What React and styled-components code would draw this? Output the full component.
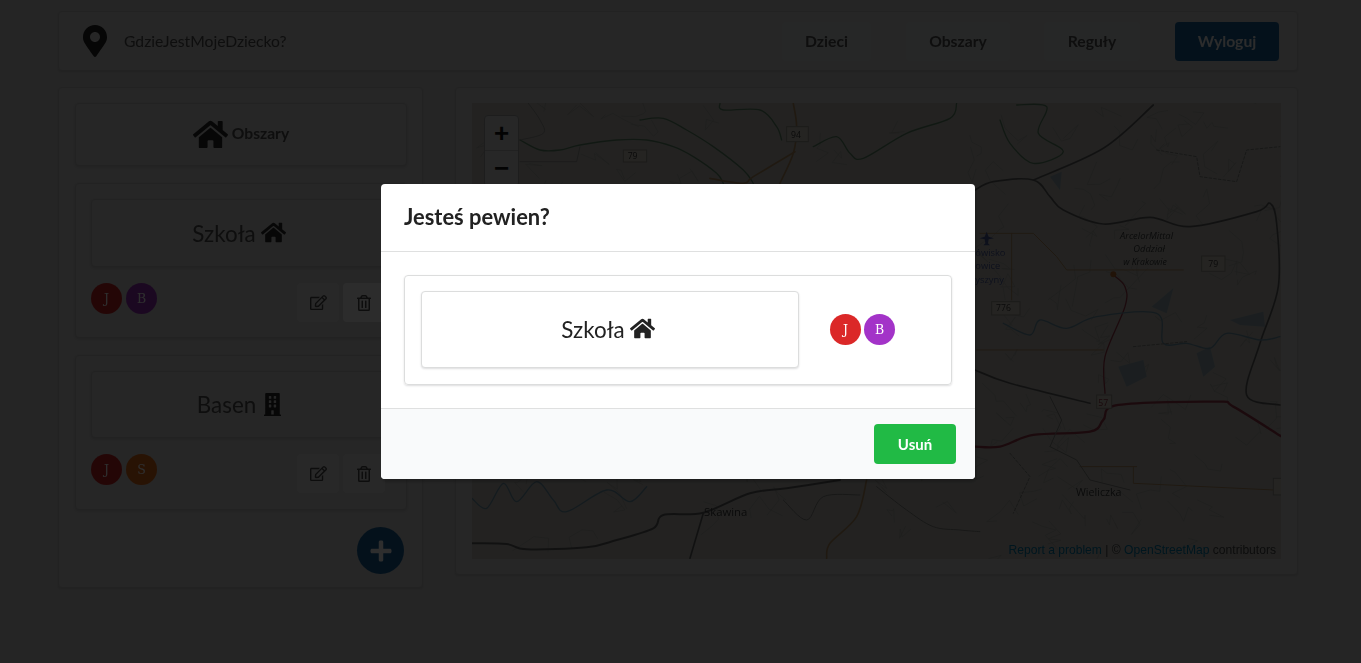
import React from 'react';
import styled, { createGlobalStyle } from 'styled-components';
import { FaHome, FaMapMarkerAlt, FaRegEdit, FaRegTrashAlt, FaBuilding, FaPlus } from 'react-icons/fa';

const Global = createGlobalStyle`
  html, body { margin: 0; padding: 0; height: 100%; background: #cccccc; overflow: hidden; }
  * { box-sizing: border-box; }
  body { font-family: Lato, "Open Sans", sans-serif; font-size: 14px; color: #505050; }
`;

const Page = styled.div`
  width: 1361px;
  height: 663px;
  padding: 11px 63px 0 58px;
  filter: blur(0.5px);
`;

const Segment = styled.div`
  background: #cfcfcf;
  border: 1px solid #bcbcbc;
  border-radius: 4px;
  box-shadow: 0 1px 2px rgba(34, 36, 38, 0.12);
`;

const NavBar = styled(Segment)`
  height: 60px;
  display: flex;
  align-items: center;
  padding: 0 18px 0 23px;
  margin-bottom: 16px;
`;

const Brand = styled.div`
  display: flex;
  align-items: center;
  flex: 1;
  font-size: 15.7px;
  svg { font-size: 32px; color: #222; margin-right: 16px; width: 26px; }
`;

const NavButton = styled.div`
  height: 39px;
  width: ${p => p.$w}px;
  margin-left: ${p => p.$ml}px;
  display: flex;
  align-items: center;
  justify-content: center;
  border-radius: 4px;
  font-weight: 700;
  font-size: 15.7px;
  background: ${p => (p.$primary ? '#176098' : '#d2d8d8')};
  color: ${p => (p.$primary ? '#f0f0f0' : '#505050')};
`;

const Columns = styled.div`
  display: grid;
  grid-template-columns: 365px 843px;
  gap: 32px;
  align-items: start;
`;

const SidePanel = styled(Segment)`
  height: 501px;
  padding: 15px 15px 0 16px;
`;

const PanelTitle = styled(Segment)`
  height: 63px;
  margin-bottom: 17px;
  display: flex;
  align-items: center;
  justify-content: center;
  gap: 4px;
  font-weight: 700;
  font-size: 15.6px;
  svg { font-size: 35px; color: #2a2a2a; }
  span { margin-bottom: 4px; }
`;

const AreaCard = styled(Segment)`
  height: 155px;
  margin-bottom: 17px;
  padding: 15px;
`;

const AreaName = styled(Segment)`
  height: ${p => p.$h || 68}px;
  display: flex;
  align-items: center;
  justify-content: center;
  gap: 5px;
  font-size: 22.4px;
  svg { font-size: 25px; color: #2a2a2a; margin: 0 4px 2px 0; }
`;

const BuildingIcon = styled(FaBuilding)`
  && { width: 17px; height: 23px; margin: 0 4px 0 3px; }
`;

const AreaFooter = styled.div`
  display: flex;
  justify-content: space-between;
  padding: 16px 6px 0 0;
`;

const Avatars = styled.div`
  display: flex;
  gap: ${p => p.$gap}px;
`;

const Avatar = styled.div`
  width: 31px;
  height: 31px;
  border-radius: 50%;
  background: ${p => p.$bg};
  color: #fff;
  font-family: "DejaVu Serif", serif;
  font-size: 12.5px;
  display: flex;
  align-items: center;
  justify-content: center;
`;

const Actions = styled.div`
  display: flex;
  gap: 4px;
`;

const ActionButton = styled.div`
  width: 42px;
  height: 39px;
  border-radius: 4px;
  background: ${p => (p.$hover ? '#f4f4f4' : '#dedede')};
  color: #4c4c4c;
  font-size: ${p => p.$size}px;
  display: flex;
  align-items: center;
  justify-content: center;
`;

const Fab = styled.div`
  width: 47px;
  height: 47px;
  margin: 16px 3px 0 auto;
  border-radius: 50%;
  background: #176098;
  color: #fff;
  font-size: 24px;
  display: flex;
  align-items: center;
  justify-content: center;
`;

const MapPanel = styled(Segment)`
  height: 488px;
  padding: 15px 16px;
`;

const MapFrame = styled.div`
  position: relative;
  height: 456px;
  background: #bfbeb9;
  overflow: hidden;
`;

const MapSvg = styled.svg`
  display: block;
  width: 809px;
  height: 456px;
  text { font-family: "Open Sans", sans-serif; }
  path { stroke-linejoin: round; stroke-linecap: round; }
`;

const ZoomControl = styled.div`
  position: absolute;
  top: 12px;
  left: 12px;
  width: 35px;
  border: 1px solid #a0a0a0;
  border-radius: 4px;
  background: #d8d8d8;
`;

const ZoomKey = styled.div`
  height: 35px;
  display: flex;
  align-items: center;
  justify-content: center;
  font-family: "Liberation Sans", sans-serif;
  font-size: 26px;
  font-weight: 700;
  color: #111;
  border-bottom: 1px solid #b4b4b4;
`;

const Attribution = styled.div`
  position: absolute;
  right: 5px;
  bottom: 2px;
  font-family: "Liberation Sans", sans-serif;
  font-size: 12.1px;
  color: #444;
  span { color: #0078a8; }
`;

const Backdrop = styled.div`
  position: fixed;
  inset: 0;
  background: rgba(0, 0, 0, 0.82);
  display: flex;
  align-items: center;
  justify-content: center;
  padding-right: 5px;
`;

const Modal = styled.div`
  width: 594px;
  height: 295px;
  background: #fff;
  border-radius: 4px;
  overflow: hidden;
  display: flex;
  flex-direction: column;
  color: #222;
  box-shadow: 1px 3px 3px rgba(0, 0, 0, 0.2);
`;

const ModalHeader = styled.div`
  height: 68px;
  padding: 0 23px 2px;
  display: flex;
  align-items: center;
  border-bottom: 1px solid #dfe0e0;
  font-size: 21.9px;
  font-weight: 700;
`;

const ModalContent = styled.div`
  flex: 1;
  padding: 23px;
`;

const ModalCard = styled.div`
  height: 110px;
  padding: 15px 16px 17px;
  display: flex;
  align-items: center;
  border: 1px solid #dcdddd;
  border-radius: 4px;
  box-shadow: 0 1px 2px rgba(34, 36, 38, 0.15);
`;

const ModalName = styled(AreaName)`
  width: 378px;
  height: 77px;
  background: #fff;
  border-color: #dcdddd;
  box-shadow: 0 1px 2px rgba(34, 36, 38, 0.15);
  margin-right: 31px;
  svg { color: #222; }
`;

const ModalFooter = styled.div`
  height: 71px;
  padding: 0 19px;
  display: flex;
  align-items: center;
  justify-content: flex-end;
  background: #f9fafb;
  border-top: 1px solid #dfe0e0;
`;

const DeleteButton = styled.div`
  width: 82px;
  height: 40px;
  border-radius: 4px;
  background: #21ba45;
  color: #fff;
  font-weight: 700;
  font-size: 15px;
  display: flex;
  align-items: center;
  justify-content: center;
`;

// catmull-rom through "x,y x,y" points, roads on the map are not straight
function curve(str) {
  const p = str.trim().split(/\s+/).map(s => s.split(',').map(Number));
  let d = `M${p[0][0]},${p[0][1]}`;
  for (let i = 0; i < p.length - 1; i++) {
    const a = p[i - 1] || p[i];
    const b = p[i];
    const c = p[i + 1];
    const e = p[i + 2] || c;
    d += ` C${b[0] + (c[0] - a[0]) / 6},${b[1] + (c[1] - a[1]) / 6} ${c[0] - (e[0] - b[0]) / 6},${c[1] - (e[1] - b[1]) / 6} ${c[0]},${c[1]}`;
  }
  return d;
}

// faint small roads all over the map, fixed seed so it never changes
function smallRoads() {
  let seed = 7;
  const rnd = n => {
    seed = (seed * 16807) % 2147483647;
    return (seed % 1000) / 1000 * n;
  };
  const out = [];
  for (let i = 0; i < 220; i++) {
    let x = 472 + rnd(809);
    let y = 103 + rnd(456);
    let d = `M${x},${y}`;
    for (let k = 0; k < 4; k++) {
      x += rnd(30) - 15;
      y += rnd(30) - 15;
      d += ` L${x},${y}`;
    }
    out.push(d);
  }
  return out.join(' ');
}

const dark = { fill: 'none', stroke: '#626262' };
const minor = { fill: 'none', stroke: '#858480' };
const green = { fill: 'none', stroke: '#608868' };
const water = { fill: 'none', stroke: '#6f94a8' };
const orange = { fill: 'none', stroke: '#b08c60' };
const red = { fill: 'none', stroke: '#983848' };
const shield = { fill: '#ccc6ba', stroke: '#96938c', strokeWidth: 3 };
const label = { fill: '#3a3a3a' };
const pond = { fill: '#94a8b2' };

function MapDrawing() {
  return (
    <MapSvg viewBox="472 103 809 456">
      <path fill="none" stroke="#a8a69f" strokeWidth="0.7" d={smallRoads()} />
      {/* top strip, coordinates as read from the crop at 3x */}
      <g transform="translate(460 90) scale(0.3333)">
        <path {...green} strokeWidth="4" d={curve('180,150 240,180 300,180 360,165 470,150 560,150 640,170 700,200 770,250 790,280')} />
        <path {...minor} strokeWidth="2" d={curve('205,40 240,90 250,130 180,150')} />
        <path {...minor} strokeWidth="2" d="M180,215 H350 L360,170" />
        <path {...green} strokeWidth="4" d={curve('540,90 610,85 680,120 760,170 850,240 880,280')} />
        <path {...green} strokeWidth="4" d={curve('780,40 790,60 900,60 950,110 965,150')} />
        <path {...orange} strokeWidth="5" d={curve('1000,40 1010,110 1000,190 960,280')} />
        <path {...orange} strokeWidth="5" d={curve('1005,185 880,260 850,280 750,265')} />
        <path {...green} strokeWidth="4" d={curve('1060,170 1130,140 1170,190 1210,205 1340,130 1470,85 1490,40')} />
        <rect {...shield} x="980" y="110" width="65" height="45" />
        <rect {...shield} x="490" y="180" width="70" height="36" />
        <text {...label} x="993" y="144" fontSize="26">94</text>
        <text {...label} x="503" y="208" fontSize="26">79</text>
      </g>
      {/* bottom strip */}
      <g transform="translate(460 470) scale(0.3333)">
        <path {...dark} strokeWidth="6" d={curve('36,220 140,222 200,238 380,232 470,210 580,175 610,135 730,128 870,70 980,55 1140,30')} />
        <path {...water} strokeWidth="4" d={curve('36,85 80,115 130,40 170,95 230,35 280,90 320,125 440,60 510,95 560,50')} />
        <path {...dark} strokeWidth="5" d="M730,130 L690,265" />
        <path {...orange} strokeWidth="5" d={curve('1220,30 1190,140 1110,220 1100,265')} />
        <path {...minor} strokeWidth="3" d={curve('1250,50 1340,120 1420,170 1500,180 1560,185')} />
        <path {...minor} strokeWidth="3" d={curve('970,90 1040,150 1090,80 1200,75')} />
        <text {...label} x="732" y="138" fontSize="34">Skawina</text>
      </g>
      {/* right part beside the dialog */}
      <g transform="translate(970 100) scale(0.3333)">
        <path {...pond} d="M680,760 L720,740 L735,800 L700,830 Z M445,800 L520,780 L530,830 L470,860 Z M545,620 L610,565 L590,640 Z M780,660 L880,635 L885,680 L810,675 Z M240,230 L275,215 L270,270 Z" />
        <path {...dark} strokeWidth="5" d={curve('15,270 70,245 190,240 240,290 280,330 400,372 540,352 660,380 860,335 900,310 920,370 925,560 870,730 830,885 930,915')} />
        <path {...dark} strokeWidth="5" d={curve('190,240 400,145 550,15')} />
        <path {...green} strokeWidth="4" d={curve('90,60 120,130 190,190 280,155 205,100 230,20 140,15')} />
        <path {...dark} strokeWidth="5" d={curve('15,810 120,850 360,910')} />
        <path {...red} strokeWidth="7" d={curve('15,1040 90,1040 190,1005 360,995 400,960 445,915 740,905 790,920 935,1010')} />
        <path {...red} strokeWidth="4" d={curve('405,880 405,770 465,620 465,560 430,525')} />
        <path {...water} strokeWidth="4" d={curve('100,670 180,705 210,660 290,685 380,650 560,640 580,730 650,730 720,745 770,700 870,720 930,710')} />
        <path {...orange} strokeWidth="3" d="M30,400 H190 L260,470 L290,510 H640 M125,400 V600 M20,750 H400 M500,1100 H330 M490,1100 V1150 L910,1170" />
        <path {...minor} strokeWidth="3" strokeDasharray="8 6" d="M560,150 L680,170 L690,230 L800,245 L830,150 L930,140 M490,740 L650,725 M120,1060 L180,1130 L130,1240" />
        <path {...minor} strokeWidth="3" d="M240,1040 L320,1080 L360,1140 L480,1170 M240,890 L275,960 L240,1040" />
        <rect {...shield} x="380" y="885" width="45" height="40" />
        <rect {...shield} x="65" y="605" width="85" height="40" />
        <rect {...shield} x="695" y="468" width="70" height="46" />
        <rect {...shield} x="910" y="1135" width="25" height="50" />
        <text x="385" y="919" fontSize="26" fill="#8a3040">57</text>
        <text {...label} x="78" y="634" fontSize="26">776</text>
        <text {...label} x="715" y="502" fontSize="26">79</text>
        <text {...label} x="318" y="1187" fontSize="32">Wieliczka</text>
        <text {...label} x="450" y="418" fontSize="28" fontStyle="italic">ArcelorMittal</text>
        <text {...label} x="490" y="455" fontSize="28" fontStyle="italic">Oddział</text>
        <text {...label} x="460" y="496" fontSize="26" fontStyle="italic">w Krakowie</text>
        <text fill="#4c5a98" fontSize="28" x="16" y="467">ówisko</text>
        <text fill="#4c5a98" fontSize="28" x="16" y="508">owice</text>
        <text fill="#4c5a98" fontSize="28" x="16" y="550">yszyny</text>
        <path fill="#4c5a98" d="M50,395 L56,410 L72,415 L56,418 L54,430 L60,436 H40 L46,430 L44,418 L28,415 L44,410 Z" />
        <circle cx="430" cy="523" r="9" fill="#b86830" />
      </g>
    </MapSvg>
  );
}

const people = { J: '#c92525', B: '#9630b8', S: '#de6819' };

function AreaRow({ name, icon, kids, hover, nameH }) {
  return (
    <AreaCard>
      <AreaName $h={nameH}><span>{name}</span> {icon}</AreaName>
      <AreaFooter>
        <Avatars $gap={4}>
          {kids.map(k => <Avatar key={k} $bg={people[k]}>{k}</Avatar>)}
        </Avatars>
        <Actions>
          <ActionButton $size={17}><FaRegEdit /></ActionButton>
          <ActionButton $size={16} $hover={hover}><FaRegTrashAlt /></ActionButton>
        </Actions>
      </AreaFooter>
    </AreaCard>
  );
}

export default function App() {
  return (
    <>
      <Global />
      <Page>
        <NavBar>
          <Brand><FaMapMarkerAlt />GdzieJestMojeDziecko?</Brand>
          <NavButton $w={89} $ml={0}>Dzieci</NavButton>
          <NavButton $w={104} $ml={35}>Obszary</NavButton>
          <NavButton $w={96} $ml={34}>Reguły</NavButton>
          <NavButton $w={104} $ml={35} $primary>Wyloguj</NavButton>
        </NavBar>
        <Columns>
          <SidePanel>
            <PanelTitle><FaHome /><span>Obszary</span></PanelTitle>
            <AreaRow name="Szkoła" icon={<FaHome />} kids={['J', 'B']} hover />
            <AreaRow name="Basen" icon={<BuildingIcon preserveAspectRatio="none" />} kids={['J', 'S']} nameH={67} />
            <Fab><FaPlus /></Fab>
          </SidePanel>
          <MapPanel>
            <MapFrame>
              <MapDrawing />
              <ZoomControl>
                <ZoomKey>+</ZoomKey>
                <ZoomKey>−</ZoomKey>
              </ZoomControl>
              <Attribution><span>Report a problem</span> | © <span>OpenStreetMap</span> contributors</Attribution>
            </MapFrame>
          </MapPanel>
        </Columns>
      </Page>
      <Backdrop>
        <Modal>
          <ModalHeader>Jesteś pewien?</ModalHeader>
          <ModalContent>
            <ModalCard>
              <ModalName><span>Szkoła</span> <FaHome /></ModalName>
              <Avatars $gap={3}>
                <Avatar $bg="#db2828">J</Avatar>
                <Avatar $bg="#a333c8">B</Avatar>
              </Avatars>
            </ModalCard>
          </ModalContent>
          <ModalFooter>
            <DeleteButton>Usuń</DeleteButton>
          </ModalFooter>
        </Modal>
      </Backdrop>
    </>
  );
}
